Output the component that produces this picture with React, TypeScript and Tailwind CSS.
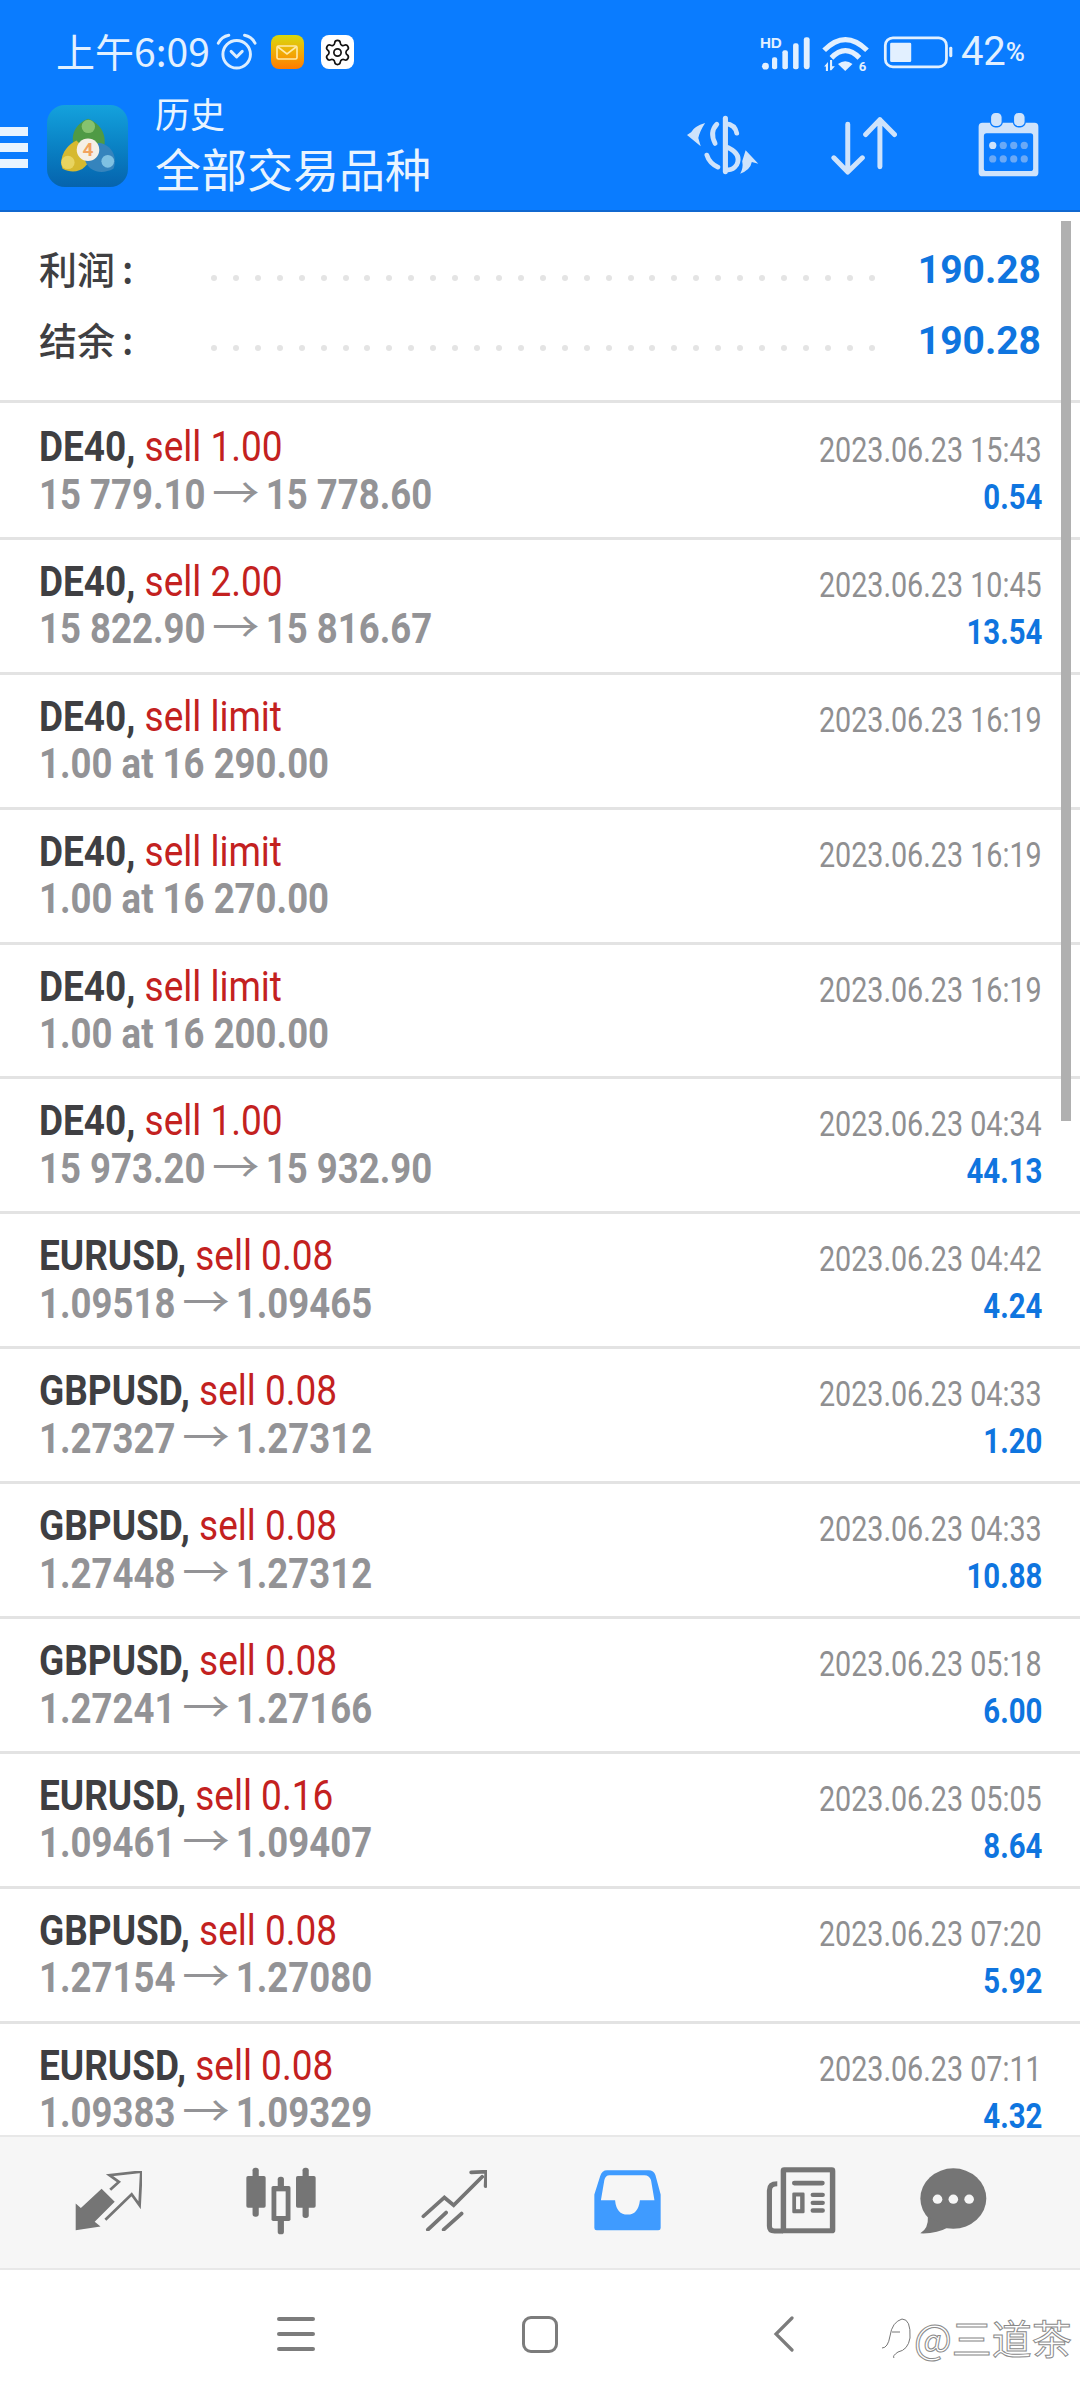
import { Settings } from 'lucide-react';

const deals = [
  { sym: 'DE40', side: 'sell 1.00', sub: ['15 779.10', '15 778.60'], date: '2023.06.23 15:43', pl: '0.54' },
  { sym: 'DE40', side: 'sell 2.00', sub: ['15 822.90', '15 816.67'], date: '2023.06.23 10:45', pl: '13.54' },
  { sym: 'DE40', side: 'sell limit', sub: ['1.00 at 16 290.00'], date: '2023.06.23 16:19', pl: '' },
  { sym: 'DE40', side: 'sell limit', sub: ['1.00 at 16 270.00'], date: '2023.06.23 16:19', pl: '' },
  { sym: 'DE40', side: 'sell limit', sub: ['1.00 at 16 200.00'], date: '2023.06.23 16:19', pl: '' },
  { sym: 'DE40', side: 'sell 1.00', sub: ['15 973.20', '15 932.90'], date: '2023.06.23 04:34', pl: '44.13' },
  { sym: 'EURUSD', side: 'sell 0.08', sub: ['1.09518', '1.09465'], date: '2023.06.23 04:42', pl: '4.24' },
  { sym: 'GBPUSD', side: 'sell 0.08', sub: ['1.27327', '1.27312'], date: '2023.06.23 04:33', pl: '1.20' },
  { sym: 'GBPUSD', side: 'sell 0.08', sub: ['1.27448', '1.27312'], date: '2023.06.23 04:33', pl: '10.88' },
  { sym: 'GBPUSD', side: 'sell 0.08', sub: ['1.27241', '1.27166'], date: '2023.06.23 05:18', pl: '6.00' },
  { sym: 'EURUSD', side: 'sell 0.16', sub: ['1.09461', '1.09407'], date: '2023.06.23 05:05', pl: '8.64' },
  { sym: 'GBPUSD', side: 'sell 0.08', sub: ['1.27154', '1.27080'], date: '2023.06.23 07:20', pl: '5.92' },
  { sym: 'EURUSD', side: 'sell 0.08', sub: ['1.09383', '1.09329'], date: '2023.06.23 07:11', pl: '4.32' },
];

const cjk = "font-['Noto_Sans_CJK_SC','Noto_Sans',sans-serif]";
const roboto = "font-['Roboto','Noto_Sans_CJK_SC',sans-serif]";

function SummaryLine({ label, value }: { label: string; value: string }) {
  return (
    <div className="flex h-[70.5px] items-center px-[39px]">
      <span className={`-mt-[5px] w-[172px] text-[38px] font-medium leading-none text-[#3f3f42] ${cjk}`}>
        {label}
        <span className="ml-[7px]">:</span>
      </span>
      <div className="flex w-[664px] translate-y-[7px] justify-between">
        {Array.from({ length: 31 }).map((_, i) => (
          <span key={i} className="h-[6px] w-[6px] rounded-full bg-[#e4e4e4]" />
        ))}
      </div>
      <span className={`ml-auto text-[39px] font-bold leading-none text-[#0f75df] ${roboto}`}>{value}</span>
    </div>
  );
}

function DealRow({ sym, side, sub, date, pl }: (typeof deals)[number]) {
  return (
    <div className={`flex h-[134.9px] shrink-0 justify-between border-b-[3px] border-[#e3e3e3] pl-[39px] pr-[38px] pt-[17px] ${roboto}`}>
      <div className="flex flex-col">
        <span className="h-[47.5px] origin-left scale-x-[0.86] whitespace-nowrap text-[43px] leading-[48px]">
          <b className="font-bold text-[#3f3f42]">{sym}, </b>
          <span className="text-[#c3211f]">{side}</span>
        </span>
        <span className="h-[48px] origin-left scale-x-[0.85] whitespace-nowrap text-[43px] font-bold leading-[48px] text-[#939396]">
          {sub[0]}
          {sub[1] && (
            <>
              <span className="mx-[14px] inline-block scale-x-[1.3] font-normal">→</span>
              {sub[1]}
            </>
          )}
        </span>
      </div>
      <div className="mt-[4px] flex flex-col items-end">
        <span className="h-[47px] origin-right scale-x-[0.82] whitespace-nowrap text-[35px] leading-[49px] text-[#8f8f91]">{date}</span>
        <span className="h-[47px] origin-right scale-x-[0.84] whitespace-nowrap text-[35px] font-bold leading-[49px] text-[#0f75df]">{pl}</span>
      </div>
    </div>
  );
}

function StatusBar() {
  return (
    <div className="flex h-[96px] items-center justify-between pl-[56px] pr-[55px] pt-[8px] text-[#e2f0ff]">
      <div className="flex items-center">
        <span className={`-mt-[4px] text-[39px] leading-none ${cjk}`}>上午6:09</span>
        <svg viewBox="625 95 125 120" className="ml-[6px] h-[40px] w-[41px]" fill="none" stroke="#dceeff" strokeLinecap="round">
          <circle cx="688" cy="162" r="42" strokeWidth="9" />
          <path d="M632 128Q642 108 664 104M712 104Q734 108 744 128" strokeWidth="9" />
          <path d="M671 153L688 170L705 153" strokeWidth="9" strokeLinejoin="round" />
        </svg>
        <div className="ml-[14px] flex h-[34px] w-[33px] items-center justify-center rounded-[8px] bg-linear-to-b from-[#d6d80e] to-[#ff7a00]">
          <svg viewBox="0 0 22 15" className="h-[15px] w-[22px]" fill="none" stroke="#ffeaa8" strokeWidth="1.6">
            <rect x="1" y="1" width="20" height="13" rx="1.5" />
            <path d="M2 2L11 9L20 2" />
          </svg>
        </div>
        <div className="ml-[17px] flex h-[34px] w-[33px] items-center justify-center rounded-[8px] bg-white">
          <Settings size={29} strokeWidth={1.4} color="#111" />
        </div>
      </div>
      <div className="flex items-center">
        <svg viewBox="635 100 575 110" className="h-[38px] w-[199px]">
          <text x="640" y="142" fontSize="44" fontWeight="700" fontFamily="Liberation Sans" fill="#e2f0ff">HD</text>
          <g fill="#e2f0ff">
            <circle cx="656" cy="196" r="10" />
            <rect x="675" y="170" width="15" height="35" rx="6" />
            <rect x="705" y="150" width="16" height="55" rx="6" />
            <rect x="736" y="130" width="16" height="75" rx="6" />
            <rect x="767" y="112" width="17" height="93" rx="7" />
            <path d="M866 190Q887 174 908 190L887 210Z" />
            <path d="M826 197L837 184V210H831V197ZM843 178H849V196L857 196L847 208H843Z" />
          </g>
          <path d="M826 150Q887 88 950 150M847 172Q887 130 928 172" fill="none" stroke="#e2f0ff" strokeWidth="15" />
          <text x="926" y="209" fontSize="38" fontWeight="700" fontFamily="Roboto" fill="#e2f0ff">6</text>
          <rect x="1003" y="114" width="177" height="84" rx="22" fill="none" stroke="#e2f0ff" strokeWidth="8" />
          <rect x="1017" y="128" width="61" height="56" rx="4" fill="#e2f0ff" />
          <rect x="1188" y="140" width="9" height="30" rx="4" fill="#e2f0ff" />
        </svg>
        <span className={`ml-[4px] text-[40px] leading-none ${roboto}`}>42</span>
        <span className={`text-[26px] font-medium leading-none ${roboto}`}>%</span>
      </div>
    </div>
  );
}

function Mt4Logo() {
  return (
    <div className="ml-[19px] flex h-[82px] w-[81px] items-center justify-center rounded-[18px] bg-linear-to-b from-[#14a2dd] to-[#0663ad]">
      <svg viewBox="170 340 170 175" className="h-[62px] w-[60px]">
        <path d="M255 350C295 365 308 400 300 432L218 432C202 400 218 365 255 350Z" fill="#4f9a45" />
        <circle cx="256" cy="372" r="19" fill="#86c26f" />
        <path d="M222 412C188 428 172 465 183 492C220 512 258 492 264 450Z" fill="#d6b92f" />
        <circle cx="198" cy="474" r="19" fill="#e8d460" />
        <path d="M285 418C328 424 338 465 327 492C290 512 250 497 245 460Z" fill="#3584bd" />
        <circle cx="311" cy="471" r="18" fill="#7fc1e2" />
        <circle cx="255" cy="438" r="32" fill="#f5efe6" />
        <text x="255" y="457" textAnchor="middle" fontSize="54" fontWeight="700" fontFamily="Roboto" fill="#f2a35e">4</text>
      </svg>
    </div>
  );
}

function Toolbar() {
  return (
    <div className="flex flex-1 items-start">
      <div className="mt-[31px] flex h-[41px] w-[28px] flex-col justify-between">
        <span className="h-[9px] bg-[#e8f4ff]" />
        <span className="h-[9px] bg-[#e8f4ff]" />
        <span className="h-[9px] bg-[#e8f4ff]" />
      </div>
      <div className="mt-[9px]">
        <Mt4Logo />
      </div>
      <div className={`-mt-[3px] ml-[27px] flex flex-col text-[#e9f4ff] ${cjk}`}>
        <span className="text-[35px] leading-[40px]">历史</span>
        <span className="mt-[5px] text-[46px] leading-[58px]">全部交易品种</span>
      </div>
      <svg viewBox="420 345 220 175" className="ml-auto mt-[19px] h-[60px] w-[76px]" fill="none" stroke="#cfe3fb" strokeLinecap="round">
        <path d="M537 355V510" strokeWidth="15" />
        <path d="M537 370Q565 372 570 398" strokeWidth="14" />
        <path d="M512 372Q490 395 507 428" strokeWidth="14" />
        <path d="M545 440Q585 460 570 490Q560 505 545 505" strokeWidth="14" />
        <path d="M483 462Q490 485 515 497" strokeWidth="14" />
        <path d="M478 368Q445 378 437 395L425 403L465 436L458 412Q462 392 478 368Z" fill="#cfe3fb" stroke="none" />
        <path d="M580 516Q610 505 614 482L633 487L596 448L586 480Q590 500 580 516Z" fill="#cfe3fb" stroke="none" />
      </svg>
      <svg viewBox="845 350 198 175" className="ml-[70px] mt-[21px] h-[58px] w-[66px]" fill="none" stroke="#cfe3fb" strokeWidth="15" strokeLinecap="round" strokeLinejoin="round">
        <path d="M895 372V515M853 473L895 516L939 473" />
        <path d="M992 358V500M949 403L992 358L1036 403" />
      </svg>
      <svg viewBox="1268 335 186 198" className="ml-[80px] mr-[40px] mt-[16px] h-[65px] w-[63px]">
        <rect x="1270" y="368" width="182" height="163" rx="12" fill="#cfe3fb" />
        <rect x="1286" y="400" width="150" height="115" rx="8" fill="#0a7cff" />
        <rect x="1306" y="336" width="36" height="44" rx="15" fill="#cfe3fb" stroke="#0a7cff" strokeWidth="4" />
        <rect x="1376" y="336" width="36" height="44" rx="15" fill="#cfe3fb" stroke="#0a7cff" strokeWidth="4" />
        {[1313, 1345, 1377, 1409].map((x, i) => (
          <g key={x}>
            <circle cx={x} cy="437" r="11" fill={i === 0 ? '#cfe3fb' : '#6aa9f6'} />
            <circle cx={x} cy="478" r="11" fill="#6aa9f6" />
          </g>
        ))}
      </svg>
    </div>
  );
}

function TabBar() {
  const c = '#757575';
  return (
    <div className="flex h-[135px] shrink-0 items-center border-y-[2px] border-[#e8e8e8] bg-[#f6f6f6] pb-[4px]">
      <svg viewBox="218 160 194 175" preserveAspectRatio="none" className="ml-[75px] h-[60px] w-[67px]">
        <path d="M220 333V255L235 268L295 212L333 250L275 308L292 322Z" fill={c} />
        <path d="M320 215L345 192L318 172L410 162L405 260L382 228L306 302" fill="none" stroke={c} strokeWidth="8" />
      </svg>
      <svg viewBox="715 143 203 204" preserveAspectRatio="none" className="ml-[104px] h-[68px] w-[70px]">
        <rect x="734" y="145" width="18" height="147" rx="8" fill={c} />
        <rect x="716" y="170" width="56" height="95" rx="5" fill={c} />
        <rect x="807" y="172" width="18" height="173" rx="8" fill={c} />
        <rect x="789" y="200" width="55" height="105" rx="5" fill={c} />
        <rect x="803" y="216" width="27" height="74" fill="#f6f6f6" />
        <rect x="879" y="145" width="18" height="151" rx="8" fill={c} />
        <rect x="860" y="170" width="57" height="95" rx="5" fill={c} />
      </svg>
      <svg viewBox="1222 150 192 182" preserveAspectRatio="none" className="ml-[105px] h-[61px] w-[66px]" fill="none" stroke={c} strokeWidth="11" strokeLinecap="round">
        <path d="M1229 288L1290 232L1317 255L1400 170" />
        <path d="M1368 157L1412 155L1410 198" />
        <path d="M1242 328L1295 277M1288 328L1340 280" />
      </svg>
      <svg viewBox="157 152 194 182" preserveAspectRatio="none" className="ml-[107px] h-[61px] w-[67px]">
        <path d="M195 153H315Q330 153 335 168L350 225V325Q350 332 343 332H165Q158 332 158 325V225L175 170Q180 153 195 153Z" fill="#3f9bff" />
        <path d="M202 168H303Q317 168 322 182L332 242H290Q285 285 254 285Q222 285 218 242H177L187 182Q190 168 202 168Z" fill="#f6f6f6" />
      </svg>
      <svg viewBox="655 142 205 200" preserveAspectRatio="none" className="ml-[105px] h-[67px] w-[70px]">
        <path d="M688 192Q665 192 665 212V318Q665 333 680 333H705" fill="none" stroke={c} strokeWidth="15" />
        <rect x="698" y="143" width="160" height="197" rx="10" fill={c} />
        <rect x="714" y="158" width="128" height="167" fill="#f6f6f6" />
        <path d="M738 190H820" stroke={c} strokeWidth="14" strokeLinecap="round" />
        <rect x="732" y="218" width="36" height="62" rx="4" fill={c} />
        <rect x="743" y="230" width="12" height="38" fill="#f6f6f6" />
        <path d="M792 225H821M792 249H821M792 272H821" stroke={c} strokeWidth="13" strokeLinecap="round" />
      </svg>
      <svg viewBox="1102 143 195 199" preserveAspectRatio="none" className="ml-[84px] h-[66px] w-[67px]">
        <ellipse cx="1199" cy="235" rx="96" ry="91" fill={c} />
        <path d="M1125 290Q1127 325 1103 340Q1150 342 1185 322Z" fill={c} />
        <circle cx="1153" cy="237" r="14" fill="#f6f6f6" />
        <circle cx="1199" cy="237" r="14" fill="#f6f6f6" />
        <circle cx="1245" cy="237" r="14" fill="#f6f6f6" />
      </svg>
    </div>
  );
}

function NavBar() {
  return (
    <div className="relative flex flex-1 items-center bg-white pb-[2px]">
      <div className="ml-[277px] flex h-[34px] w-[38px] flex-col justify-between">
        <span className="h-[4px] rounded-full bg-[#7c7c7c]" />
        <span className="h-[4px] rounded-full bg-[#7c7c7c]" />
        <span className="h-[4px] rounded-full bg-[#7c7c7c]" />
      </div>
      <div className="ml-[207px] h-[37px] w-[36px] rounded-[9px] border-[3px] border-[#7c7c7c]" />
      <svg viewBox="0 0 22 36" className="ml-[215px] h-[36px] w-[22px]" fill="none" stroke="#7c7c7c" strokeWidth="3.2" strokeLinecap="round">
        <path d="M19 2L3 18L19 34" />
      </svg>
      <div className="absolute left-[880px] top-[46px] flex items-center">
        <svg viewBox="0 0 32 42" className="h-[42px] w-[32px]" fill="none" stroke="#777" strokeWidth="1">
          <path d="M2 32Q8 32 10 20Q12 6 22 3Q31 3 30 22Q28 34 18 36Q12 40 14 42M12 16H20" />
        </svg>
        <span className={`ml-[2px] text-[40px] leading-none text-white [-webkit-text-stroke:1px_#8a8a8a] ${cjk}`}>@三道茶</span>
      </div>
    </div>
  );
}

export default function App() {
  return (
    <div className="relative flex h-[2400px] w-[1080px] flex-col overflow-hidden bg-white">
      <div className="flex h-[212px] shrink-0 flex-col border-b-[2px] border-[#1068d0] bg-[#0a7cff]">
        <StatusBar />
        <Toolbar />
      </div>
      <div className="relative min-h-0 flex-1 overflow-hidden">
        <div className="flex h-[191px] flex-col justify-center border-b-[3px] border-[#e3e3e3]">
          <SummaryLine label="利润" value="190.28" />
          <SummaryLine label="结余" value="190.28" />
        </div>
        <div className="flex flex-col pt-[2px]">
          {deals.map((d, i) => (
            <DealRow key={i} {...d} />
          ))}
        </div>
        <div className="absolute right-[9px] top-[9px] h-[900px] w-[10px] bg-[#b0b0b0]" />
      </div>
      <TabBar />
      <div className="flex h-[130px] shrink-0 flex-col">
        <NavBar />
      </div>
    </div>
  );
}
